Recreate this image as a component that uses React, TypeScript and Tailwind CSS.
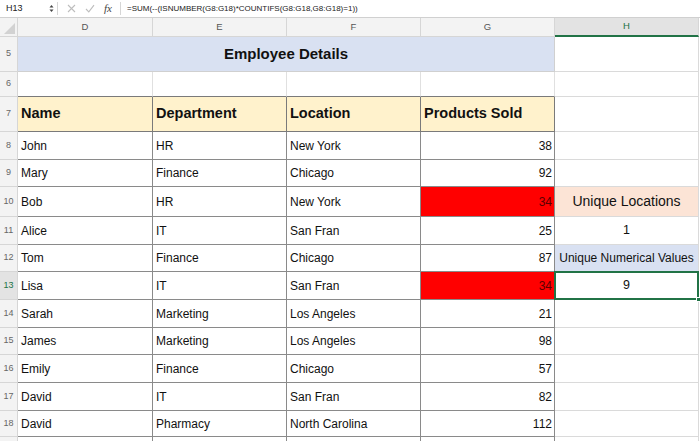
import React from "react";

type RowData = {
  n: number;
  h: string;
  name: string;
  dept: string;
  loc: string;
  sold: number;
  red?: boolean;
};

const rows: RowData[] = [
  { n: 8, h: "h-[28px]", name: "John", dept: "HR", loc: "New York", sold: 38 },
  { n: 9, h: "h-[27px]", name: "Mary", dept: "Finance", loc: "Chicago", sold: 92 },
  { n: 10, h: "h-[30px]", name: "Bob", dept: "HR", loc: "New York", sold: 34, red: true },
  { n: 11, h: "h-[28px]", name: "Alice", dept: "IT", loc: "San Fran", sold: 25 },
  { n: 12, h: "h-[27px]", name: "Tom", dept: "Finance", loc: "Chicago", sold: 87 },
  { n: 13, h: "h-[28px]", name: "Lisa", dept: "IT", loc: "San Fran", sold: 34, red: true },
  { n: 14, h: "h-[28px]", name: "Sarah", dept: "Marketing", loc: "Los Angeles", sold: 21 },
  { n: 15, h: "h-[27px]", name: "James", dept: "Marketing", loc: "Los Angeles", sold: 98 },
  { n: 16, h: "h-[28px]", name: "Emily", dept: "Finance", loc: "Chicago", sold: 57 },
  { n: 17, h: "h-[28px]", name: "David", dept: "IT", loc: "San Fran", sold: 82 },
  { n: 18, h: "h-[26px]", name: "David", dept: "Pharmacy", loc: "North Carolina", sold: 112 },
];

function RowHead({ n, active }: { n?: number | string; active?: boolean }) {
  return (
    <div
      className={`w-[18px] shrink-0 flex items-center justify-center border-r border-b border-[#d6d6d6] text-[9px] ${
        active ? "bg-[#e3e3e3] text-[#217346]" : "bg-[#f3f3f3] text-[#666]"
      }`}
    >
      {n}
    </div>
  );
}

function HCell({ n }: { n: number }) {
  if (n === 10)
    return (
      <div className="w-[144px] shrink-0 border-r border-b border-[#dadada] bg-[#fce4d6] flex items-center justify-center text-[14px] text-[#111]">
        Unique Locations
      </div>
    );
  if (n === 11)
    return (
      <div className="w-[144px] shrink-0 border-r border-b border-[#dadada] flex items-center justify-center text-[12.5px] text-[#111]">
        1
      </div>
    );
  if (n === 12)
    return (
      <div className="w-[144px] shrink-0 border-r border-b border-[#dadada] bg-[#d9e1f2] flex items-center justify-center text-[12px] text-[#111] whitespace-nowrap">
        Unique Numerical Values
      </div>
    );
  if (n === 13)
    return (
      <div className="relative w-[144px] shrink-0 border-r border-b border-[#dadada] flex items-center justify-center text-[12.5px] text-[#111]">
        9
        <div className="absolute -left-[1px] -top-[1px] -right-[1px] -bottom-[1px] border-2 border-[#217346]" />
        <div className="absolute -right-[3px] -bottom-[3px] w-[5px] h-[5px] bg-[#217346] border border-white" />
      </div>
    );
  return <div className="w-[144px] shrink-0 border-r border-b border-[#dadada]" />;
}

export default function App() {
  const font = { fontFamily: '"Liberation Sans", Arial, sans-serif' };
  return (
    <div className="w-[700px] h-[441px] overflow-hidden bg-white text-[#111]" style={font}>
      {/* Formula bar */}
      <div className="h-[18px] flex items-center border-b border-[#d0d0d0] bg-white">
        <div className="w-[46px] pl-[6px] text-[9px] text-[#222]">H13</div>
        <div className="w-[10px] flex flex-col items-center justify-center leading-none text-[#444]">
          <svg width="5" height="9" viewBox="0 0 5 9">
            <path d="M0.5 3.5 L2.5 1 L4.5 3.5 Z" fill="#444" />
            <path d="M0.5 5.5 L2.5 8 L4.5 5.5 Z" fill="#444" />
          </svg>
        </div>
        <div className="w-px h-[13px] bg-[#d6d6d6] ml-[1px]" />
        <div className="w-[62px] flex items-center">
          <svg className="ml-[9px]" width="9" height="9" viewBox="0 0 9 9">
            <path d="M1 1 L8 8 M8 1 L1 8" stroke="#bdbdbd" strokeWidth="1.1" />
          </svg>
          <svg className="ml-[9px]" width="10" height="9" viewBox="0 0 10 9">
            <path d="M1 5 L3.8 7.8 L9 1.2" stroke="#bdbdbd" strokeWidth="1.1" fill="none" />
          </svg>
          <span
            className="ml-[9px] text-[11px] italic text-[#444]"
            style={{ fontFamily: '"Liberation Serif", "Times New Roman", serif' }}
          >
            fx
          </span>
        </div>
        <div className="w-px h-[13px] bg-[#d6d6d6]" />
        <div className="pl-[6px] text-[8px] text-[#222] whitespace-nowrap">
          =SUM(--(ISNUMBER(G8:G18)*COUNTIFS(G8:G18,G8:G18)=1))
        </div>
      </div>

      {/* Column header */}
      <div className="flex h-[19px] bg-[#f3f3f3] text-[9.5px] text-[#555]">
        <div className="w-[18px] shrink-0 border-r border-b border-[#d6d6d6] relative">
          <svg className="absolute right-[2px] bottom-[2px]" width="11" height="11" viewBox="0 0 11 11">
            <path d="M11 0 L11 11 L0 11 Z" fill="#d2d2d2" />
          </svg>
        </div>
        <div className="w-[135px] shrink-0 border-r border-b border-[#d6d6d6] flex items-center justify-center">D</div>
        <div className="w-[134px] shrink-0 border-r border-b border-[#d6d6d6] flex items-center justify-center">E</div>
        <div className="w-[134px] shrink-0 border-r border-b border-[#d6d6d6] flex items-center justify-center">F</div>
        <div className="w-[134px] shrink-0 border-r border-b border-[#d6d6d6] flex items-center justify-center">G</div>
        <div className="w-[144px] shrink-0 border-r border-[#d6d6d6] border-b-2 border-b-[#217346] bg-[#e3e3e3] text-[#217346] flex items-center justify-center">
          H
        </div>
        <div className="flex-1 bg-white" />
      </div>

      {/* Row 5 */}
      <div className="flex h-[35px]">
        <RowHead n={5} />
        <div className="w-[537px] shrink-0 bg-[#d9e1f2] border-r border-b border-[#d0d0d0] flex items-center justify-center text-[15px] font-bold">
          Employee Details
        </div>
        <div className="w-[144px] shrink-0 border-r border-b border-[#dadada]" />
        <div className="flex-1" />
      </div>

      {/* Row 6 */}
      <div className="flex h-[25px]">
        <RowHead n={6} />
        <div className="w-[135px] shrink-0 border-r border-[#e0e0e0] border-b border-b-[#7a7a7a]" />
        <div className="w-[134px] shrink-0 border-r border-[#e0e0e0] border-b border-b-[#7a7a7a]" />
        <div className="w-[134px] shrink-0 border-r border-[#e0e0e0] border-b border-b-[#7a7a7a]" />
        <div className="w-[134px] shrink-0 border-r border-[#e0e0e0] border-b border-b-[#7a7a7a]" />
        <div className="w-[144px] shrink-0 border-r border-b border-[#dadada]" />
        <div className="flex-1" />
      </div>

      {/* Row 7 headers */}
      <div className="flex h-[35px]">
        <RowHead n={7} />
        {[
          ["Name", "w-[135px]"],
          ["Department", "w-[134px]"],
          ["Location", "w-[134px]"],
          ["Products Sold", "w-[134px]"],
        ].map(([t, w]) => (
          <div
            key={t}
            className={`${w} shrink-0 bg-[#fff2cc] border-r border-b border-[#7a7a7a] flex items-center pl-[3px] text-[14.5px] font-bold whitespace-nowrap`}
          >
            {t}
          </div>
        ))}
        <div className="w-[144px] shrink-0 border-r border-b border-[#dadada]" />
        <div className="flex-1" />
      </div>

      {/* Data rows */}
      {rows.map((r) => (
        <div key={r.n} className={`flex ${r.h}`}>
          <RowHead n={r.n} active={r.n === 13} />
          <div className="w-[135px] shrink-0 border-r border-b border-[#8a8a8a] flex items-center pl-[3px] text-[12px]">
            {r.name}
          </div>
          <div className="w-[134px] shrink-0 border-r border-b border-[#8a8a8a] flex items-center pl-[3px] text-[12px]">
            {r.dept}
          </div>
          <div className="w-[134px] shrink-0 border-r border-b border-[#8a8a8a] flex items-center pl-[3px] text-[12px]">
            {r.loc}
          </div>
          <div
            className={`w-[134px] shrink-0 border-r border-b border-[#8a8a8a] flex items-center justify-end pr-[2px] text-[12px] ${
              r.red ? "bg-[#ff0000] text-[#5a0000]" : ""
            }`}
          >
            {r.sold}
          </div>
          <HCell n={r.n} />
          <div className="flex-1" />
        </div>
      ))}

      {/* Row 19 partial */}
      <div className="flex h-[10px]">
        <RowHead n="" />
        <div className="w-[135px] shrink-0 border-r border-[#8a8a8a]" />
        <div className="w-[134px] shrink-0 border-r border-[#8a8a8a]" />
        <div className="w-[134px] shrink-0 border-r border-[#8a8a8a]" />
        <div className="w-[134px] shrink-0 border-r border-[#8a8a8a]" />
        <div className="w-[144px] shrink-0 border-r border-[#dadada]" />
      </div>
    </div>
  );
}
